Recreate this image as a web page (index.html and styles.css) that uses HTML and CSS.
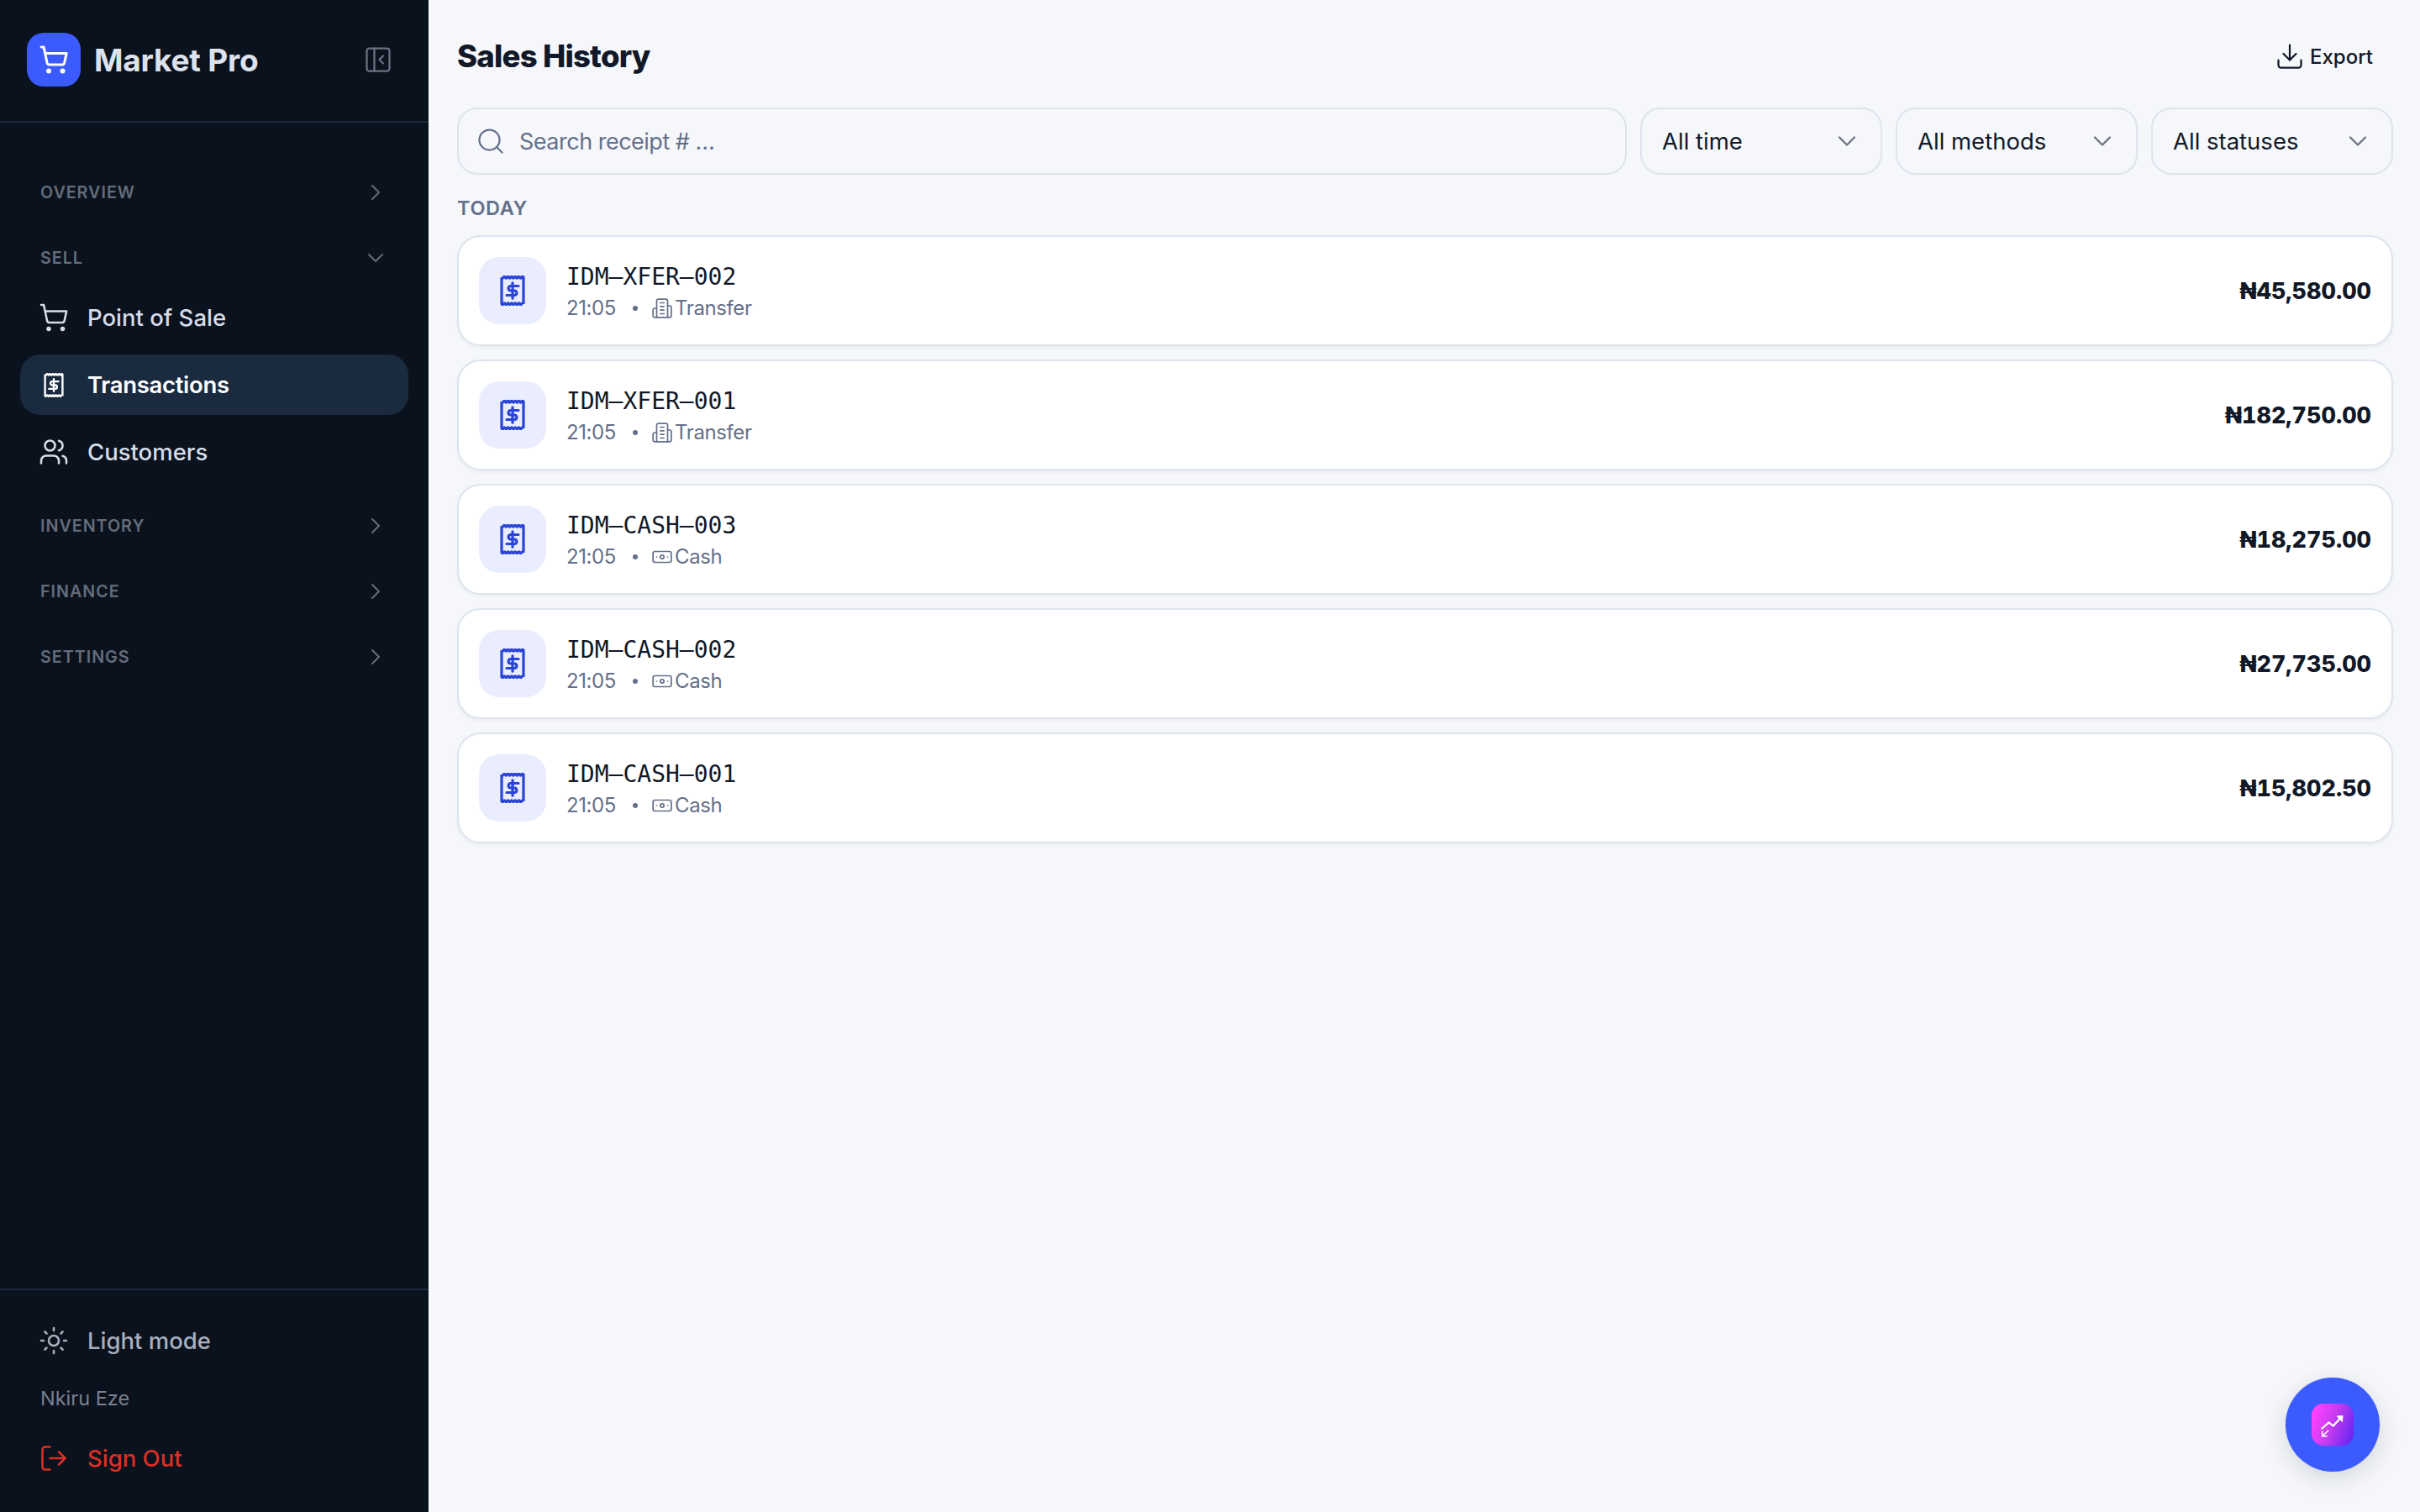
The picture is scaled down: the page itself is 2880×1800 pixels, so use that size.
FILE: index.html
```html
<!DOCTYPE html>
<html lang="en">
<head>
<meta charset="utf-8">
<title>Sales History</title>
<link rel="stylesheet" href="styles.css">
</head>
<body>
<svg class="defs" width="0" height="0" aria-hidden="true">
  <symbol id="i-cart" viewBox="0 0 24 24"><circle cx="8" cy="21" r="1"/><circle cx="19" cy="21" r="1"/><path d="M2.05 2.05h2l2.66 12.42a2 2 0 0 0 2 1.58h9.78a2 2 0 0 0 1.95-1.57l1.65-7.43H5.12"/></symbol>
  <symbol id="i-right" viewBox="0 0 24 24"><path d="m9 18 6-6-6-6"/></symbol>
  <symbol id="i-down" viewBox="0 0 24 24"><path d="m6 9 6 6 6-6"/></symbol>
  <symbol id="i-receipt" viewBox="0 0 30 36"><path stroke-linecap="butt" stroke-linejoin="miter" d="M2 2.200q1.080 2 2.170 0t2.170 0 2.170 0 2.170 0 2.170 0 2.170 0 2.170 0 2.170 0 2.170 0 2.170 0 2.170 0 2.130 0V33.800q-1.080-2-2.170 0t-2.170 0-2.170 0-2.170 0-2.170 0-2.170 0-2.170 0-2.170 0-2.170 0-2.170 0-2.170 0-2.130 0Z"/><path d="M15 8.800v18.400M22 12.500H12.400a2.800 2.800 0 0 0 0 5.500h5.200a2.800 2.800 0 0 1 0 5.500H8"/></symbol>
  <symbol id="i-building" viewBox="0 0 24 24"><path d="M6 22V4a2 2 0 0 1 2-2h8a2 2 0 0 1 2 2v18Z"/><path d="M6 12H4a2 2 0 0 0-2 2v6a2 2 0 0 0 2 2h2"/><path d="M18 9h2a2 2 0 0 1 2 2v9a2 2 0 0 1-2 2h-2"/><path d="M10 6h4M10 10h4M10 14h4M10 18h4"/></symbol>
  <symbol id="i-cash" viewBox="0 0 24 24"><rect x="2" y="6" width="20" height="12" rx="2"/><circle cx="12" cy="12" r="2"/><path d="M6 12h.01M18 12h.01"/></symbol>
</svg>

<div class="app">
  <aside class="sidebar">
    <header class="brand">
      <span class="logo"><svg class="ic-logo"><use href="#i-cart"/></svg></span>
      <span class="brand-name">Market Pro</span>
      <svg class="ic-collapse" viewBox="0 0 24 24"><rect x="3" y="3" width="18" height="18" rx="2"/><path d="M9 3v18M16 15l-3-3 3-3"/></svg>
    </header>

    <nav class="nav">
      <div class="group"><span>OVERVIEW</span><svg class="ic-chev"><use href="#i-right"/></svg></div>
      <div class="group"><span>SELL</span><svg class="ic-chev"><use href="#i-down"/></svg></div>
      <a class="item"><svg class="ic-nav"><use href="#i-cart"/></svg><span>Point of Sale</span></a>
      <a class="item active"><svg class="ic-nav-receipt"><use href="#i-receipt"/></svg><span>Transactions</span></a>
      <a class="item"><svg class="ic-nav" viewBox="0 0 24 24"><path d="M16 21v-2a4 4 0 0 0-4-4H6a4 4 0 0 0-4 4v2"/><circle cx="9" cy="7" r="4"/><path d="M22 21v-2a4 4 0 0 0-3-3.870"/><path d="M16 3.130a4 4 0 0 1 0 7.750"/></svg><span>Customers</span></a>
      <div class="group group-after"><span>INVENTORY</span><svg class="ic-chev"><use href="#i-right"/></svg></div>
      <div class="group"><span>FINANCE</span><svg class="ic-chev"><use href="#i-right"/></svg></div>
      <div class="group"><span>SETTINGS</span><svg class="ic-chev"><use href="#i-right"/></svg></div>
    </nav>

    <footer class="foot">
      <a class="foot-item theme"><svg class="ic-nav" viewBox="0 0 24 24"><circle cx="12" cy="12" r="4"/><path d="M12 2v2M12 20v2M4.930 4.930l1.410 1.410M17.660 17.660l1.410 1.410M2 12h2M20 12h2M6.340 17.660l-1.410 1.410M19.070 4.930l-1.410 1.410"/></svg><span>Light mode</span></a>
      <div class="user">Nkiru Eze</div>
      <a class="foot-item signout"><svg class="ic-nav" viewBox="0 0 24 24"><path d="M9 21H5a2 2 0 0 1-2-2V5a2 2 0 0 1 2-2h4"/><path d="m16 17 5-5-5-5"/><path d="M21 12H9"/></svg><span>Sign Out</span></a>
    </footer>
  </aside>

  <main class="main">
    <div class="top">
      <h1>Sales History</h1>
      <button class="export"><svg class="ic-export" viewBox="0 0 24 24"><path d="M21 15v4a2 2 0 0 1-2 2H5a2 2 0 0 1-2-2v-4"/><path d="m7 10 5 5 5-5"/><path d="M12 15V3"/></svg><span>Export</span></button>
    </div>

    <div class="filters">
      <div class="search"><svg class="ic-search" viewBox="0 0 24 24"><circle cx="11" cy="11" r="8"/><path d="m21 21-4.300-4.300"/></svg><span>Search receipt # …</span></div>
      <div class="select"><span>All time</span><svg class="ic-select"><use href="#i-down"/></svg></div>
      <div class="select"><span>All methods</span><svg class="ic-select"><use href="#i-down"/></svg></div>
      <div class="select"><span>All statuses</span><svg class="ic-select"><use href="#i-down"/></svg></div>
    </div>

    <div class="day">TODAY</div>

    <ul class="list">
      <li class="card">
        <span class="badge"><svg class="ic-badge"><use href="#i-receipt"/></svg></span>
        <div class="info"><div class="code">IDM–XFER–002</div><div class="meta"><span>21:05</span><i class="dot"></i><svg class="ic-meta"><use href="#i-building"/></svg><span>Transfer</span></div></div>
        <div class="amount">₦45,580.00</div>
      </li>
      <li class="card">
        <span class="badge"><svg class="ic-badge"><use href="#i-receipt"/></svg></span>
        <div class="info"><div class="code">IDM–XFER–001</div><div class="meta"><span>21:05</span><i class="dot"></i><svg class="ic-meta"><use href="#i-building"/></svg><span>Transfer</span></div></div>
        <div class="amount">₦182,750.00</div>
      </li>
      <li class="card">
        <span class="badge"><svg class="ic-badge"><use href="#i-receipt"/></svg></span>
        <div class="info"><div class="code">IDM–CASH–003</div><div class="meta"><span>21:05</span><i class="dot"></i><svg class="ic-meta"><use href="#i-cash"/></svg><span>Cash</span></div></div>
        <div class="amount">₦18,275.00</div>
      </li>
      <li class="card">
        <span class="badge"><svg class="ic-badge"><use href="#i-receipt"/></svg></span>
        <div class="info"><div class="code">IDM–CASH–002</div><div class="meta"><span>21:05</span><i class="dot"></i><svg class="ic-meta"><use href="#i-cash"/></svg><span>Cash</span></div></div>
        <div class="amount">₦27,735.00</div>
      </li>
      <li class="card">
        <span class="badge"><svg class="ic-badge"><use href="#i-receipt"/></svg></span>
        <div class="info"><div class="code">IDM–CASH–001</div><div class="meta"><span>21:05</span><i class="dot"></i><svg class="ic-meta"><use href="#i-cash"/></svg><span>Cash</span></div></div>
        <div class="amount">₦15,802.50</div>
      </li>
    </ul>
  </main>
</div>

<button class="fab"><span class="fab-inner"><svg class="ic-fab" viewBox="0 0 50 50"><path d="M12.500 29.500 20.500 22.500 25.700 26.500 34 17.500"/><path class="fab-head" d="M30.500 15 37 14.500 36.500 21Z"/><path class="fab-low" d="M19.500 32.500 13 38.500M12.700 33.500v5.300H18"/></svg></span></button>
</body>
</html>
```

FILE: styles.css
```css
* { box-sizing: border-box; }
html, body { margin: 0; padding: 0; height: 100%; }
body {
  font-family: Inter, "Liberation Sans", sans-serif;
  background: #f5f7fb;
  color: #111827;
  overflow: hidden;
}
svg { fill: none; stroke: currentColor; stroke-linecap: round; stroke-linejoin: round; stroke-width: 2; flex: none; display: block; }
.defs { position: absolute; }

.app { display: flex; height: 1800px; }

/* Sidebar */
.sidebar {
  width: 512px;
  flex: none;
  display: flex;
  flex-direction: column;
  background: #0a121e;
  border-right: 2px solid #fbfcfe;
}
.brand {
  height: 146px;
  flex: none;
  display: flex;
  align-items: center;
  padding: 0 32px 2px;
  border-bottom: 2px solid #1c283c;
}
.logo {
  width: 64px;
  height: 64px;
  border-radius: 20px;
  background: #3b5bff;
  color: #fff;
  display: flex;
  align-items: center;
  justify-content: center;
}
.ic-logo { width: 36px; height: 36px; stroke-width: 2; }
.brand-name {
  margin-left: 16px;
  font-size: 37px;
  font-weight: 700;
  letter-spacing: -0.2px;
  color: #dde2ec;
  flex: 1;
}
.ic-collapse { width: 36px; height: 36px; color: #6b7280; margin-right: 10px; stroke-width: 1.500; }

.nav { flex: 1; padding: 44px 24px 0; display: flex; flex-direction: column; }
.group {
  height: 78px;
  flex: none;
  display: flex;
  align-items: center;
  justify-content: space-between;
  padding: 0 24px;
  color: #646c7a;
  font-size: 19.700px;
  font-weight: 600;
  letter-spacing: 1px;
}
.group-after { margin-top: 5px; }
.ic-chev { width: 32px; height: 32px; margin-right: -1px; stroke-width: 1.500; }
.item {
  height: 72px;
  flex: none;
  margin-bottom: 8px;
  display: flex;
  align-items: center;
  gap: 22px;
  padding: 0 22px;
  border-radius: 24px;
  color: #d6dce8;
  font-size: 27.500px;
  font-weight: 500;
}
.group + .item { margin-top: -4px; }
.item.active { background: #1a2a3f; color: #fff; font-weight: 600; letter-spacing: -0.300px; }
.ic-nav { width: 36px; height: 36px; stroke-width: 1.700; }
.ic-nav-receipt { width: 24px; height: 29px; margin: 0 6px; stroke-width: 3; }

.foot {
  flex: none;
  height: 266px;
  border-top: 2px solid #1c283c;
  padding: 24px 46px 0;
  display: flex;
  flex-direction: column;
}
.foot-item { display: flex; align-items: center; gap: 22px; height: 72px; font-size: 27.500px; font-weight: 500; }
.theme { color: #a8afbd; }
.user { height: 65px; margin: 0 0 3px 2px; display: flex; align-items: center; font-size: 23.500px; color: #7a808e; }
.signout { color: #d93025; }

/* Main */
.main { flex: 1; min-width: 0; padding: 0 32px; }
.top { height: 128px; padding-top: 6px; display: flex; align-items: center; justify-content: space-between; }
h1 { margin: 0; font-size: 36.500px; font-weight: 800; letter-spacing: -0.800px; color: #111827; }
.export {
  display: flex;
  align-items: center;
  gap: 6px;
  background: none;
  border: 0;
  padding: 0 24px 0 0;
  font: 500 24px Inter, "Liberation Sans", sans-serif;
  color: #111827;
}
.ic-export { width: 36px; height: 36px; stroke-width: 1.500; }

.filters { display: flex; gap: 16px; height: 80px; }
.search, .select {
  display: flex;
  align-items: center;
  border: 2px solid #dde4ee;
  border-radius: 24px;
  font-size: 27.500px;
}
.search { flex: 1; padding: 0 24px; gap: 16px; color: #64708a; font-size: 27px; letter-spacing: -0.500px; }
.ic-search { width: 36px; height: 36px; margin-left: -4px; color: #64708a; stroke-width: 1.500; }
.select { width: 288px; flex: none; padding: 0 24px; justify-content: space-between; color: #111827; }
.ic-select { width: 36px; height: 36px; margin-right: -2px; color: #6b7280; stroke-width: 1.500; }

.day { height: 72px; line-height: 79px; font-size: 23.500px; font-weight: 600; letter-spacing: 0.600px; color: #64708a; }

.list { list-style: none; margin: 0; padding: 0; display: flex; flex-direction: column; gap: 16px; }
.card {
  height: 132px;
  display: flex;
  align-items: center;
  gap: 24px;
  padding: 0 24px;
  background: #fff;
  border: 2px solid #dde4ee;
  border-radius: 28px;
  box-shadow: 0 2px 4px rgba(15, 23, 42, .05);
}
.badge {
  width: 80px;
  height: 80px;
  border-radius: 24px;
  background: #e9edfd;
  color: #2a44d8;
  display: flex;
  align-items: center;
  justify-content: center;
  flex: none;
}
.ic-badge { width: 30px; height: 36px; stroke-width: 3.200; }
.info { flex: 1; min-width: 0; padding-top: 2px; }
.code { font: 400 28px/39px "DejaVu Sans Mono", "Liberation Mono", monospace; color: #111827; }
.meta { display: flex; align-items: center; height: 36px; font-size: 24px; letter-spacing: -0.400px; color: #64708a; }
.dot { width: 6px; height: 6px; border-radius: 50%; background: #64708a; margin: 0 16px 0 20px; }
.ic-meta { width: 26px; height: 26px; margin-right: 2px; stroke-width: 1.600; }
.amount { font-size: 27px; font-weight: 800; font-variant-numeric: tabular-nums; color: #111827; }

/* FAB (floats over the page) */
.fab {
  position: fixed;
  right: 48px;
  bottom: 48px;
  width: 112px;
  height: 112px;
  border-radius: 50%;
  border: 0;
  padding: 0;
  background: #3b5bff;
  box-shadow: 0 8px 30px rgba(15, 23, 42, .14), 0 0 0 1px rgba(15, 23, 42, .05);
  display: flex;
  align-items: center;
  justify-content: center;
}
.fab-inner {
  width: 50px;
  height: 50px;
  border-radius: 14px;
  background: linear-gradient(110deg, #ff40ff 10%, #c23cf0 50%, #5a22f0 100%);
  color: #fff;
  display: block;
}
.ic-fab { width: 50px; height: 50px; stroke-width: 2.200; stroke-linecap: square; stroke-linejoin: miter; }
.fab-head { fill: #fff; stroke-width: 1; }
.fab-low { stroke-width: 1.600; }
```
